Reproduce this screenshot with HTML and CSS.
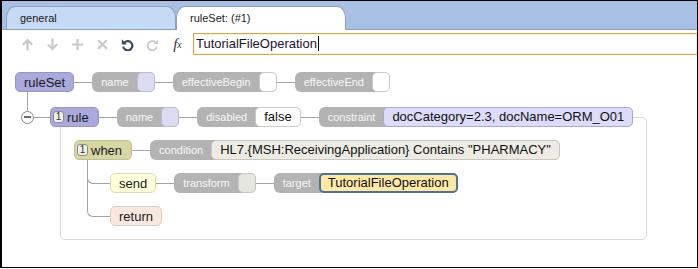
FILE: index.html
```html
<!DOCTYPE html>
<html lang="en">
<head>
  <meta charset="UTF-8" />
  <title>Rule Editor</title>
  <link rel="stylesheet" href="styles.css">
</head>
<body>
  <div class="frame">
    <!-- Tabs -->
    <div class="tabs">
      <div class="tab">general</div>
      <div class="tab active">ruleSet: (#1)</div>
    </div>

    <!-- Toolbar -->
    <div class="toolbar">
      <span class="tool off">
        <svg width="13" height="13" viewBox="0 0 13 13"><path d="M6.5 12.5V2M1.8 6.7l4.7-4.7 4.7 4.7"/></svg>
      </span>
      <span class="tool off">
        <svg width="13" height="13" viewBox="0 0 13 13"><path d="M6.5 0.5V11M1.8 6.3l4.7 4.7 4.7-4.7"/></svg>
      </span>
      <span class="tool off">
        <svg width="13" height="13" viewBox="0 0 13 13"><path d="M6.5 1v11M1 6.5h11"/></svg>
      </span>
      <span class="tool off">
        <svg width="13" height="13" viewBox="0 0 13 13"><path d="M2.2 2.2l8.6 8.6M10.8 2.2l-8.6 8.6"/></svg>
      </span>
      <span class="tool on">
        <svg width="13" height="13" viewBox="0 0 13 13"><path d="M3.6 4.3A4.6 4.6 0 1 1 2.2 8.6"/><polygon points="0.8,1.2 0.8,6.4 6,6.4"/></svg>
      </span>
      <span class="tool off">
        <svg width="13" height="13" viewBox="0 0 13 13" class="flip"><path class="thin" d="M3.6 4.3A4.6 4.6 0 1 1 2.2 8.6"/><polygon points="1.2,1.8 1.2,6 5.4,6"/></svg>
      </span>
      <span class="tool fx"><i>f</i><sub>x</sub></span>
      <div class="expr">TutorialFileOperation<span class="caret"></span></div>
    </div>

    <!-- Rule tree -->
    <div class="tree">
      <div class="row">
        <div class="node rs">ruleSet</div>
        <i class="link"></i>
        <div class="field"><span class="lbl">name</span><span class="val v-lav"></span></div>
        <i class="link"></i>
        <div class="field"><span class="lbl">effectiveBegin</span><span class="val v-white"></span></div>
        <i class="link"></i>
        <div class="field"><span class="lbl">effectiveEnd</span><span class="val v-white"></span></div>
      </div>

      <div class="stem"></div>

      <div class="row front">
        <span class="toggle"></span>
        <i class="link short"></i>
        <div class="node rs b"><span class="badge">1</span>rule</div>
        <i class="link"></i>
        <div class="field"><span class="lbl">name</span><span class="val v-lav"></span></div>
        <i class="link"></i>
        <div class="field"><span class="lbl">disabled</span><span class="val v-white">false</span></div>
        <i class="link"></i>
        <div class="field"><span class="lbl">constraint</span><span class="val v-con">docCategory=2.3, docName=ORM_O01</span></div>
      </div>

      <div class="box">
        <div class="row">
          <div class="node when b"><span class="badge">1</span>when</div>
          <i class="link"></i>
          <div class="field"><span class="lbl">condition</span><span class="val v-cond">HL7.{MSH:ReceivingApplication} Contains "PHARMACY"</span></div>
        </div>
        <div class="kids">
          <div class="row">
            <i class="elbow first"></i>
            <div class="node send">send</div>
            <i class="link"></i>
            <div class="field"><span class="lbl">transform</span><span class="val v-tr"></span></div>
            <i class="link"></i>
            <div class="field"><span class="lbl">target</span><span class="val v-tgt">TutorialFileOperation</span></div>
          </div>
          <div class="row">
            <i class="elbow"></i>
            <div class="node ret">return</div>
          </div>
        </div>
      </div>
    </div>
  </div>
</body>
</html>
```
FILE: styles.css
```css
/* Basic Reset */
* {
  margin: 0;
  padding: 0;
  box-sizing: border-box;
}

body {
  font-family: "Liberation Sans", Arial, sans-serif;
  background: #fff;
}

.frame {
  width: 698px;
  height: 268px;
  border: 1px solid #000;
  border-left-width: 2px;
  overflow: hidden;
}

/* TABS */
.tabs {
  display: flex;
  align-items: flex-end;
  height: 29px;
  padding-left: 4px;
  background: #a7c0e4;
  border-bottom: 1px solid #8e9db5;
}
.tab {
  width: 170px;
  height: 23px;
  padding: 5px 0 0 13px;
  background: #c5daf4;
  border: 1px solid #8ea0ba;
  border-bottom: none;
  border-radius: 9px 9px 0 0 / 12px 12px 0 0;
  font-size: 11px;
  color: #1a1a1a;
}
.tab.active {
  height: 24px;
  margin-bottom: -1px;
  background: #fff;
}

/* TOOLBAR */
.toolbar {
  display: flex;
  align-items: center;
  padding: 3px 0 3px 13px;
}
.tool {
  width: 25px;
  height: 22px;
  display: flex;
  justify-content: center;
  align-items: center;
}
.tool svg path {
  fill: none;
  stroke: currentColor;
  stroke-width: 2.2;
}
.tool svg path.thin { stroke-width: 1.8; }
.tool svg polygon { fill: currentColor; }
.tool svg.flip { transform: scaleX(-1); }
.tool.off { color: #c9c9c9; }
.tool.on { color: #3b4a5c; }
.tool.fx {
  font-family: "Liberation Serif", serif;
  font-size: 15px;
  color: #333;
}
.tool.fx sub { font-size: 10px; font-style: italic; vertical-align: -1px; }

.expr {
  flex: 1;
  height: 22px;
  margin-left: 3px;
  padding-left: 2px;
  border: 1px solid #dba64c;
  border-right: none;
  box-shadow: inset 0 0 0 1px #fbefd6;
  font-size: 13px;
  line-height: 20px;
  color: #1c1033;
}
.caret {
  display: inline-block;
  width: 1px;
  height: 15px;
  margin-left: 1px;
  background: #000;
  vertical-align: -3px;
}

/* TREE */
.tree {
  padding: 14px 0 0 13px;
}
.row {
  display: flex;
  align-items: center;
  height: 20px;
}
.row.front {
  position: relative;
  z-index: 1;
}
.link {
  display: block;
  width: 18px;
  height: 1px;
  background: #a3a3a3;
}
.link.short { width: 16px; }

.stem {
  width: 1px;
  height: 19px;
  margin: 0 0 -4px 12px;
  background: #a3a3a3;
}
.toggle {
  width: 13px;
  height: 13px;
  margin-left: 6px;
  border: 1px solid #8a8a8a;
  border-radius: 50%;
  background: #fff;
  display: flex;
  justify-content: center;
  align-items: center;
}
.toggle::before {
  content: "";
  width: 7px;
  height: 2px;
  background: #6a6a6a;
}

.node {
  height: 20px;
  padding: 0 8px;
  border: 1px solid;
  border-radius: 5px;
  display: flex;
  align-items: center;
  font-size: 13px;
  color: #1a1a1a;
}
.node.b { padding-left: 2px; padding-right: 9px; }
.badge {
  width: 11px;
  height: 12px;
  margin-right: 3px;
  border: 1px solid #8c8c8c;
  border-radius: 3px;
  background: #eeeeea;
  font-size: 10px;
  line-height: 10px;
  text-align: center;
  color: #333;
}
.rs { background: #a9a9dc; border-color: #9595c8; }
.when { background: #d7d7a6; border-color: #c2c290; }
.send { background: #ffffdc; border-color: #deddb0; }
.ret { background: #f8e8df; border-color: #dfccc2; }

.field {
  display: flex;
  height: 20px;
  border-radius: 6px;
  background: #b3b3b3;
}
.lbl {
  padding: 0 8px 0 9px;
  font-size: 11px;
  line-height: 20px;
  color: #f7f7f7;
}
.val {
  height: 20px;
  min-width: 18px;
  padding: 0 8px;
  border: 1px solid;
  border-radius: 5px;
  font-size: 13px;
  line-height: 18px;
  color: #111;
}
.v-lav { background: #dcdcf0; border-color: #bbbbd6; }
.v-white { background: #fff; border-color: #cacaca; }
.v-con { background: #dcdcfa; border-color: #a9a9d6; }
.v-cond { background: #ecece4; border-color: #c8c8be; }
.v-tr { background: #e6e6e0; border-color: #c8c8c0; }
.v-tgt {
  background: #fde8a6;
  border: 2px solid #4d7592;
  line-height: 16px;
  padding: 0 7px;
}

/* CHILD CONTAINER OF RULE */
.box {
  width: 587px;
  margin: -10px 0 0 45px;
  padding: 22px 0 13px 13px;
  border: 1px solid #d9d9d9;
  border-radius: 5px;
}
.kids {
  display: flex;
  flex-direction: column;
  gap: 13px;
  margin: 13px 0 0 13px;
}
.elbow {
  display: block;
  align-self: flex-start;
  width: 23px;
  height: 44px;
  margin-top: -33px;
  border-left: 1px solid #a3a3a3;
  border-bottom: 1px solid #a3a3a3;
  border-bottom-left-radius: 6px;
}
.elbow.first {
  height: 24px;
  margin-top: -13px;
}
```
